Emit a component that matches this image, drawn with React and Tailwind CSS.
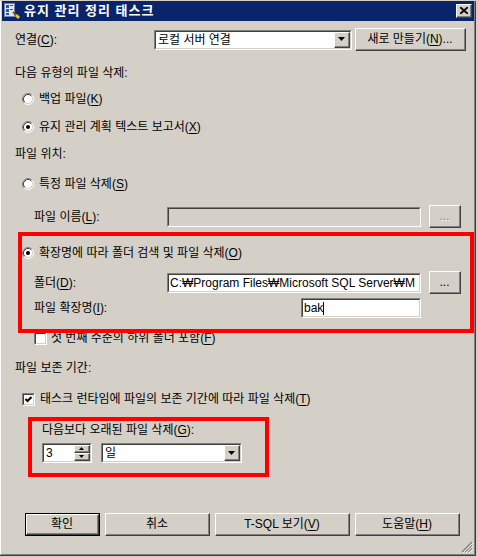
import React from "react";

// classic Win2003 style dialog: 유지 관리 정리 태스크

const Sunken = ({ className = "", inner = "bg-white", children }) => (
  <div className={`border-t border-l border-b border-r border-t-[#808080] border-l-[#808080] border-b-white border-r-white ${className}`}>
    <div className={`h-full w-full border-t border-l border-b border-r border-t-[#404040] border-l-[#404040] border-b-[#d4d0c8] border-r-[#d4d0c8] overflow-hidden ${inner}`}>
      {children}
    </div>
  </div>
);

const Raised = ({ className = "", children }) => (
  <div className={`border-t border-l border-b border-r border-t-white border-l-white border-b-[#404040] border-r-[#404040] bg-[#d4d0c8] ${className}`}>
    <div className="h-full w-full border-b border-r border-b-[#808080] border-r-[#808080] flex items-center justify-center">
      {children}
    </div>
  </div>
);

const DefaultButton = ({ className = "", children }) => (
  <div className={`border border-black ${className}`}>
    <div className="h-full w-full border-t border-l border-b border-r border-t-white border-l-white border-b-[#404040] border-r-[#404040]">
      <div className="h-full w-full border-b border-r border-b-[#808080] border-r-[#808080] flex items-center justify-center">
        {children}
      </div>
    </div>
  </div>
);

const Arrow = () => (
  <svg width="7" height="4" viewBox="0 0 7 4">
    <polygon points="0,0 7,0 3.5,4" fill="#000" />
  </svg>
);

const Combo = ({ className = "", text }) => (
  <Sunken className={className}>
    <div className="flex h-full items-center">
      <span className="flex-1 pl-[2px] whitespace-nowrap">{text}</span>
      <Raised className="w-[16px] h-full">
        <Arrow />
      </Raised>
    </div>
  </Sunken>
);

const Radio = ({ checked }) => (
  <svg width="12" height="12" viewBox="0 0 12 12" className="shrink-0">
    <circle cx="6" cy="6" r="4.5" fill="#fff" />
    <path d="M9.89 2.11 A5.5 5.5 0 0 0 2.11 9.89" fill="none" stroke="#808080" />
    <path d="M2.11 9.89 A5.5 5.5 0 0 0 9.89 2.11" fill="none" stroke="#fff" />
    <path d="M9.18 2.82 A4.5 4.5 0 0 0 2.82 9.18" fill="none" stroke="#404040" />
    <path d="M2.82 9.18 A4.5 4.5 0 0 0 9.18 2.82" fill="none" stroke="#d4d0c8" />
    {checked && <circle cx="6" cy="6" r="2" fill="#000" />}
  </svg>
);

const Check = ({ checked }) => (
  <Sunken className="w-[13px] h-[13px] shrink-0">
    {checked && (
      <svg width="9" height="9" viewBox="0 0 9 9">
        <polyline points="1.5,4 3.5,6 7.5,2" fill="none" stroke="#000" strokeWidth="2" />
      </svg>
    )}
  </Sunken>
);

const Ul = ({ children }) => <span className="underline underline-offset-2">{children}</span>;

function App() {
  return (
    <div className="relative w-[478px] h-[557px] bg-[#d4d0c8] pt-[1px] text-[12px] leading-[16px] text-black font-['Liberation_Sans','Noto_Sans_CJK_KR',sans-serif]">
      <div className="w-[476px] h-[555px] border-r border-b border-r-[#404040] border-b-[#404040]">
        <div className="relative h-full border-l border-l-white border-r border-b border-r-[#808080] border-b-[#808080] pl-[1px] flex flex-col">
          {/* title bar */}
          <div className="h-[20px] bg-[#0a246a] flex items-center">
            <svg width="16" height="16" viewBox="0 0 16 16" className="ml-[2px]">
              <rect x="0.5" y="0.5" width="10" height="13" fill="#dfe6f2" stroke="#6f86b5" />
              <rect x="2" y="2" width="3" height="3" fill="#2d55a8" />
              <rect x="6" y="2" width="3" height="1" fill="#2d55a8" />
              <rect x="2" y="6" width="3" height="3" fill="#2d55a8" />
              <rect x="6" y="6" width="3" height="1" fill="#2d55a8" />
              <rect x="2" y="10" width="3" height="2" fill="#2d55a8" />
              <line x1="9" y1="9" x2="12" y2="12" stroke="#7a5a10" strokeWidth="2" />
              <polygon points="11,13 13,11 16,14 14,16" fill="#f4c820" stroke="#9a7a10" strokeWidth="0.5" />
            </svg>
            <span className="ml-[4px] text-white font-bold text-[13px] tracking-[1px]">유지 관리 정리 태스크</span>
            <div className="flex-1" />
            <Raised className="w-[16px] h-[14px] mr-[2px]">
              <svg width="8" height="7" viewBox="0 0 8 7">
                <path d="M0 0 L8 7 M8 0 L0 7" stroke="#000" strokeWidth="1.8" />
              </svg>
            </Raised>
          </div>

          {/* connection */}
          <div className="mt-[7px] h-[23px] flex items-center">
            <span className="ml-[13px] w-[139px]">연결(<Ul>C</Ul>):</span>
            <Combo className="w-[198px] h-[20px]" text="로컬 서버 연결" />
            <Raised className="ml-[3px] w-[111px] h-[23px]">
              <span>새로 만들기(<Ul>N</Ul>)...</span>
            </Raised>
          </div>

          <div className="mt-[14px] h-[16px] flex items-center">
            <span className="ml-[13px]">다음 유형의 파일 삭제:</span>
          </div>
          <div className="mt-[10px] h-[16px] flex items-center gap-[5px] pl-[20px]">
            <Radio />
            <span>백업 파일(<Ul>K</Ul>)</span>
          </div>
          <div className="mt-[12px] h-[16px] flex items-center gap-[5px] pl-[20px]">
            <Radio checked />
            <span>유지 관리 계획 텍스트 보고서(<Ul>X</Ul>)</span>
          </div>

          <div className="mt-[11px] h-[16px] flex items-center">
            <span className="ml-[13px]">파일 위치:</span>
          </div>
          <div className="mt-[14px] h-[16px] flex items-center gap-[5px] pl-[20px]">
            <Radio />
            <span>특정 파일 삭제(<Ul>S</Ul>)</span>
          </div>
          <div className="mt-[13px] h-[23px] flex items-center">
            <span className="ml-[32px] w-[133px]">파일 이름(<Ul>L</Ul>):</span>
            <Sunken className="w-[254px] h-[20px]" inner="bg-[#d4d0c8]" />
            <Raised className="ml-[8px] w-[32px] h-[23px]">
              <span className="text-[#808080] [text-shadow:1px_1px_0_#fff]">...</span>
            </Raised>
          </div>

          <div className="mt-[17px] h-[16px] flex items-center gap-[5px] pl-[20px]">
            <Radio checked />
            <span>확장명에 따라 폴더 검색 및 파일 삭제(<Ul>O</Ul>)</span>
          </div>
          <div className="mt-[10px] h-[23px] flex items-center">
            <span className="ml-[32px] w-[133px]">폴더(<Ul>D</Ul>):</span>
            <Sunken className="w-[254px] h-[20px]">
              <div className="w-full overflow-hidden pl-[1px] whitespace-nowrap leading-[16px]">C:₩Program Files₩Microsoft SQL Server₩M</div>
            </Sunken>
            <Raised className="ml-[8px] w-[32px] h-[23px]">
              <span>...</span>
            </Raised>
          </div>
          <div className="mt-[4px] h-[20px] flex items-center">
            <span className="ml-[32px] w-[267px]">파일 확장명(<Ul>I</Ul>):</span>
            <Sunken className="w-[120px] h-[20px]">
              <div className="pl-[1px] leading-[16px] flex items-center">
                bak<span className="inline-block w-px h-[13px] bg-black" />
              </div>
            </Sunken>
          </div>
          <div className="mt-[12px] h-[16px] flex items-center gap-[4px] pl-[32px]">
            <Check />
            <span>첫 번째 수준의 하위 폴더 포함(<Ul>F</Ul>)</span>
          </div>

          <div className="mt-[14px] h-[16px] flex items-center">
            <span className="ml-[13px]">파일 보존 기간:</span>
          </div>
          <div className="mt-[15px] h-[16px] flex items-center gap-[5px] pl-[20px]">
            <Check checked />
            <span>태스크 런타임에 파일의 보존 기간에 따라 파일 삭제(<Ul>T</Ul>)</span>
          </div>
          <div className="mt-[15px] h-[16px] flex items-center">
            <span className="ml-[40px]">다음보다 오래된 파일 삭제(<Ul>G</Ul>):</span>
          </div>
          <div className="mt-[5px] h-[20px] flex items-center">
            <Sunken className="ml-[40px] w-[50px] h-[20px]">
              <div className="flex h-full">
                <span className="flex-1 pl-[2px] leading-[16px]">3</span>
                <div className="w-[16px] h-full flex flex-col">
                  <Raised className="h-1/2 w-full">
                    <svg width="5" height="3" viewBox="0 0 5 3"><polygon points="2.5,0 5,3 0,3" fill="#000" /></svg>
                  </Raised>
                  <Raised className="h-1/2 w-full">
                    <svg width="5" height="3" viewBox="0 0 5 3"><polygon points="0,0 5,0 2.5,3" fill="#000" /></svg>
                  </Raised>
                </div>
              </div>
            </Sunken>
            <Combo className="ml-[9px] w-[141px] h-[20px]" text="일" />
          </div>

          {/* buttons */}
          <div className="mt-[50px] h-[23px] flex items-center">
            <DefaultButton className="ml-[23px] w-[75px] h-[23px]">
              <span>확인</span>
            </DefaultButton>
            <Raised className="ml-[5px] w-[105px] h-[23px]">
              <span>취소</span>
            </Raised>
            <Raised className="ml-[5px] w-[135px] h-[23px]">
              <span>T-SQL 보기(<Ul>V</Ul>)</span>
            </Raised>
            <Raised className="ml-[5px] w-[105px] h-[23px]">
              <span>도움말(<Ul>H</Ul>)</span>
            </Raised>
          </div>

          {/* size grip */}
          <svg width="12" height="12" viewBox="0 0 12 12" className="absolute right-[1px] bottom-[1px]">
            <path d="M11 1 L1 11 M11 4 L4 11 M11 7 L7 11" stroke="#808080" strokeWidth="1.4" />
            <path d="M12 2 L2 12 M12 5 L5 12 M12 8 L8 12" stroke="#fff" strokeWidth="0.8" />
          </svg>
        </div>
      </div>

      {/* red annotation boxes */}
      <div className="absolute left-[18px] top-[232px] w-[456px] h-[101px] border-[4px] border-[#ff0000]" />
      <div className="absolute left-[28px] top-[417px] w-[241px] h-[60px] border-[4px] border-[#ff0000]" />
    </div>
  );
}

export default App;
